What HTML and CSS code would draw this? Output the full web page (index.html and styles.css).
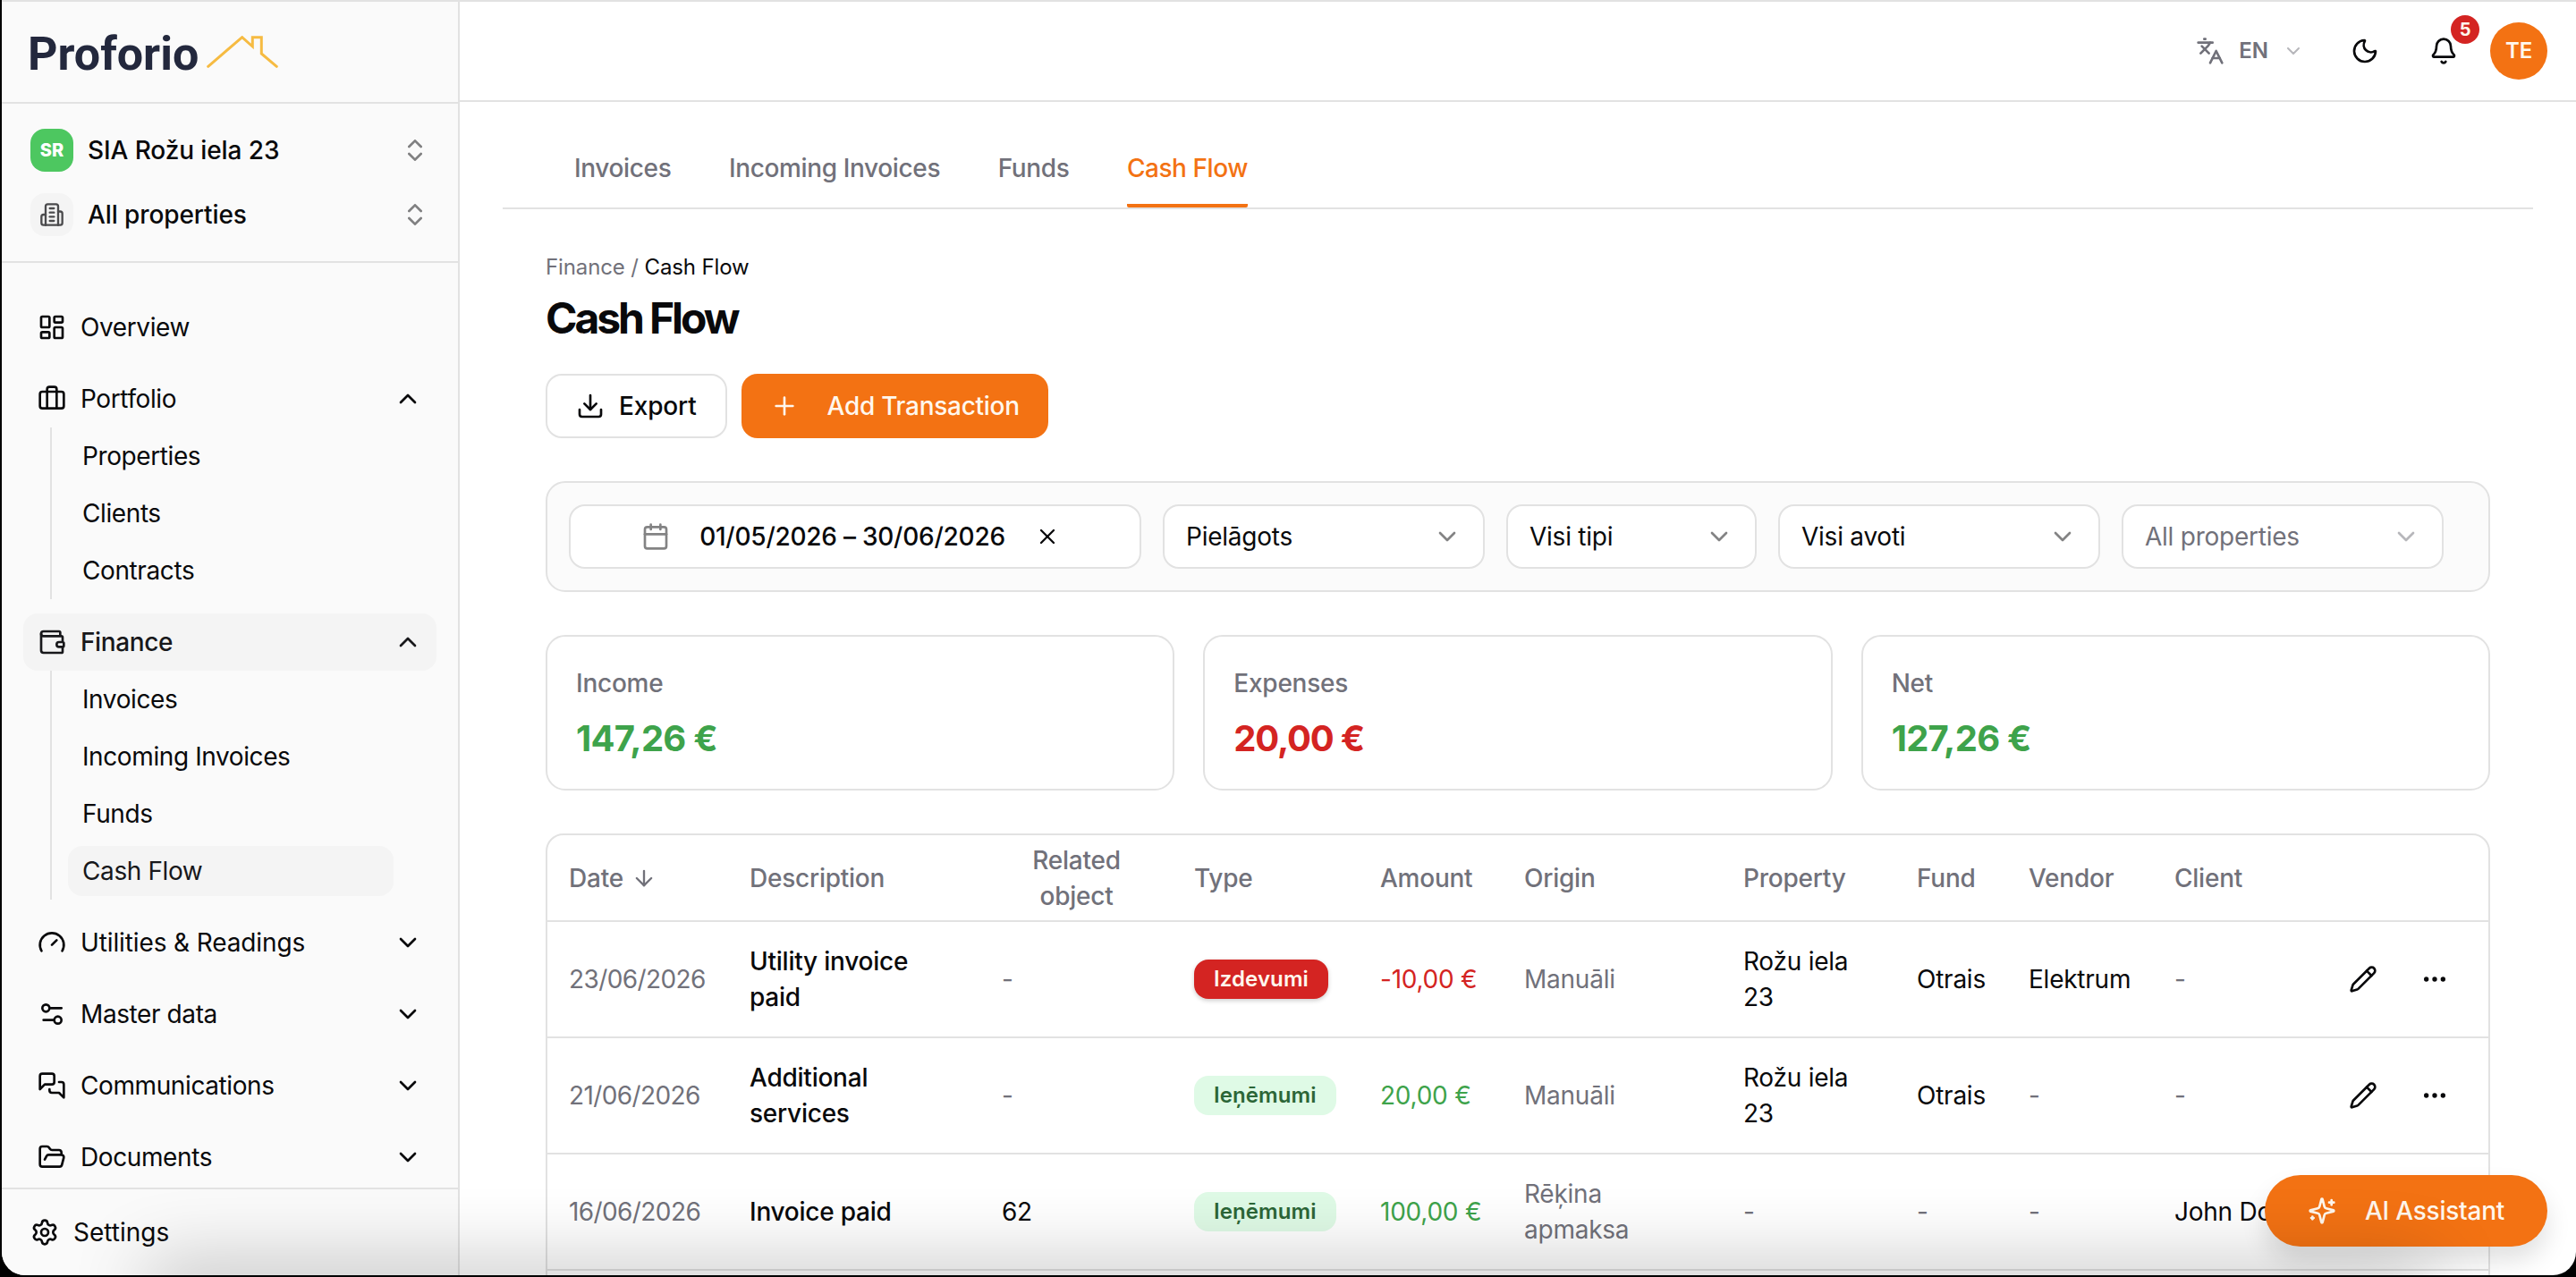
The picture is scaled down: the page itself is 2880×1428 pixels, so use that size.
FILE: index.html
```html
<!DOCTYPE html>
<html lang="en">
<head>
<meta charset="utf-8">
<title>Cash Flow</title>
<link rel="stylesheet" href="styles.css">
</head>
<body>
<svg class="sprite" aria-hidden="true">
  <symbol id="i-updown" viewBox="0 0 24 24"><path d="m7 15 5 5 5-5"/><path d="m7 9 5-5 5 5"/></symbol>
  <symbol id="i-building" viewBox="0 0 24 24"><path d="M6 22V4a2 2 0 0 1 2-2h8a2 2 0 0 1 2 2v18Z"/><path d="M6 12H4a2 2 0 0 0-2 2v6a2 2 0 0 0 2 2h2"/><path d="M18 9h2a2 2 0 0 1 2 2v9a2 2 0 0 1-2 2h-2"/><path d="M10 6h4"/><path d="M10 10h4"/><path d="M10 14h4"/><path d="M10 18h4"/></symbol>
  <symbol id="i-dashboard" viewBox="0 0 24 24"><rect width="7" height="9" x="3" y="3" rx="1"/><rect width="7" height="5" x="14" y="3" rx="1"/><rect width="7" height="9" x="14" y="12" rx="1"/><rect width="7" height="5" x="3" y="16" rx="1"/></symbol>
  <symbol id="i-luggage" viewBox="0 0 24 24"><path d="M16 20V4a2 2 0 0 0-2-2h-4a2 2 0 0 0-2 2v16"/><rect width="20" height="14" x="2" y="6" rx="2"/></symbol>
  <symbol id="i-wallet" viewBox="0 0 24 24"><path d="M19 7V4a1 1 0 0 0-1-1H5a2 2 0 0 0 0 4h15a1 1 0 0 1 1 1v4h-3a2 2 0 0 0 0 4h3a1 1 0 0 0 1-1v-2a1 1 0 0 0-1-1"/><path d="M3 5v14a2 2 0 0 0 2 2h15a1 1 0 0 0 1-1v-4"/></symbol>
  <symbol id="i-gauge" viewBox="0 0 24 24"><path d="m12 14 4-4"/><path d="M3.34 19a10 10 0 1 1 17.32 0"/></symbol>
  <symbol id="i-sliders" viewBox="0 0 24 24"><path d="M20 7h-9"/><path d="M14 17H5"/><circle cx="17" cy="17" r="3"/><circle cx="7" cy="7" r="3"/></symbol>
  <symbol id="i-messages" viewBox="0 0 24 24"><path d="M14 9a2 2 0 0 1-2 2H6l-4 4V4a2 2 0 0 1 2-2h8a2 2 0 0 1 2 2z"/><path d="M18 9h2a2 2 0 0 1 2 2v11l-4-4h-6a2 2 0 0 1-2-2v-1"/></symbol>
  <symbol id="i-folder" viewBox="0 0 24 24"><path d="m6 14 1.5-2.9A2 2 0 0 1 9.24 10H20a2 2 0 0 1 1.94 2.5l-1.54 6a2 2 0 0 1-1.95 1.5H4a2 2 0 0 1-2-2V5a2 2 0 0 1 2-2h3.9a2 2 0 0 1 1.69.9l.81 1.2a2 2 0 0 0 1.67.9H18a2 2 0 0 1 2 2v2"/></symbol>
  <symbol id="i-settings" viewBox="0 0 24 24"><path d="M9.671 4.136a2.34 2.34 0 0 1 4.659 0 2.34 2.34 0 0 0 3.319 1.915 2.34 2.34 0 0 1 2.33 4.033 2.34 2.34 0 0 0 0 3.831 2.34 2.34 0 0 1-2.33 4.033 2.34 2.34 0 0 0-3.319 1.915 2.34 2.34 0 0 1-4.659 0 2.34 2.34 0 0 0-3.32-1.915 2.34 2.34 0 0 1-2.33-4.033 2.34 2.34 0 0 0 0-3.831A2.34 2.34 0 0 1 6.35 6.051a2.34 2.34 0 0 0 3.319-1.915"/><circle cx="12" cy="12" r="3"/></symbol>
  <symbol id="i-down" viewBox="0 0 24 24"><path d="m6 9 6 6 6-6"/></symbol>
  <symbol id="i-up" viewBox="0 0 24 24"><path d="m18 15-6-6-6 6"/></symbol>
  <symbol id="i-lang" viewBox="0 0 24 24"><path d="m5 8 6 6"/><path d="m4 14 6-6 2-3"/><path d="M2 5h12"/><path d="M7 2h1"/><path d="m22 22-5-10-5 10"/><path d="M14 18h6"/></symbol>
  <symbol id="i-moon" viewBox="0 0 24 24"><path d="M20.985 12.486a9 9 0 1 1-9.473-9.472c.405-.022.617.46.402.803a6 6 0 0 0 8.268 8.268c.344-.215.825-.004.803.401"/></symbol>
  <symbol id="i-bell" viewBox="0 0 24 24"><path d="M10.268 21a2 2 0 0 0 3.464 0"/><path d="M3.262 15.326A1 1 0 0 0 4 17h16a1 1 0 0 0 .74-1.673C19.41 13.956 18 12.499 18 8A6 6 0 0 0 6 8c0 4.499-1.411 5.956-2.738 7.326"/></symbol>
  <symbol id="i-download" viewBox="0 0 24 24"><path d="M12 15V3"/><path d="M21 15v4a2 2 0 0 1-2 2H5a2 2 0 0 1-2-2v-4"/><path d="m7 10 5 5 5-5"/></symbol>
  <symbol id="i-plus" viewBox="0 0 24 24"><path d="M5 12h14"/><path d="M12 5v14"/></symbol>
  <symbol id="i-calendar" viewBox="0 0 24 24"><path d="M8 2v4"/><path d="M16 2v4"/><rect width="18" height="18" x="3" y="4" rx="2"/><path d="M3 10h18"/></symbol>
  <symbol id="i-x" viewBox="0 0 24 24"><path d="M18 6 6 18"/><path d="m6 6 12 12"/></symbol>
  <symbol id="i-arrow" viewBox="0 0 24 24"><path d="M12 5v14"/><path d="m19 12-7 7-7-7"/></symbol>
  <symbol id="i-pencil" viewBox="0 0 24 24"><path d="M21.174 6.812a1 1 0 0 0-3.986-3.987L3.842 16.174a2 2 0 0 0-.5.83l-1.321 4.352a.5.5 0 0 0 .623.622l4.353-1.32a2 2 0 0 0 .83-.497z"/><path d="m15 5 4 4"/></symbol>
  <symbol id="i-dots" viewBox="0 0 24 24"><circle cx="12" cy="12" r="1"/><circle cx="19" cy="12" r="1"/><circle cx="5" cy="12" r="1"/></symbol>
  <symbol id="i-sparkles" viewBox="0 0 24 24"><path d="M9.937 15.5A2 2 0 0 0 8.5 14.063l-6.135-1.582a.5.5 0 0 1 0-.962L8.5 9.936A2 2 0 0 0 9.937 8.5l1.582-6.135a.5.5 0 0 1 .963 0L14.063 8.5A2 2 0 0 0 15.5 9.937l6.135 1.581a.5.5 0 0 1 0 .964L15.5 14.063a2 2 0 0 0-1.437 1.437l-1.582 6.135a.5.5 0 0 1-.963 0z"/><path d="M20 3v4"/><path d="M22 5h-4"/><path d="M4 17v2"/><path d="M5 18H3"/></symbol>
</svg>
<div class="window">
  <aside class="sidebar">
    <div class="brand">
      <span class="brand-name">Proforio</span>
      <svg class="brand-roof" viewBox="0 0 80 36"><path d="M1.700 34.300 39.700 1.700l11.600 10.300V1.700h10V20l17 14.300"/></svg>
    </div>
    <div class="switchers">
      <div class="switcher"><span class="tile tile-green">SR</span><span class="switcher-name">SIA Rožu iela 23</span><svg class="icon faded"><use href="#i-updown"/></svg></div>
      <div class="switcher"><span class="tile tile-gray"><svg class="icon icon-28"><use href="#i-building"/></svg></span><span class="switcher-name">All properties</span><svg class="icon faded"><use href="#i-updown"/></svg></div>
    </div>
    <nav class="nav">
      <div class="group"><div class="item"><svg class="icon"><use href="#i-dashboard"/></svg><span>Overview</span></div></div>
      <div class="group">
        <div class="item"><svg class="icon"><use href="#i-luggage"/></svg><span>Portfolio</span><svg class="icon"><use href="#i-up"/></svg></div>
        <div class="sub"><div class="subitem">Properties</div><div class="subitem">Clients</div><div class="subitem">Contracts</div></div>
      </div>
      <div class="group">
        <div class="item item-active"><svg class="icon"><use href="#i-wallet"/></svg><span>Finance</span><svg class="icon"><use href="#i-up"/></svg></div>
        <div class="sub"><div class="subitem">Invoices</div><div class="subitem">Incoming Invoices</div><div class="subitem">Funds</div><div class="subitem subitem-active">Cash Flow</div></div>
      </div>
      <div class="group"><div class="item item-long"><svg class="icon"><use href="#i-gauge"/></svg><span>Utilities &amp; Readings</span><svg class="icon"><use href="#i-down"/></svg></div></div>
      <div class="group"><div class="item"><svg class="icon"><use href="#i-sliders"/></svg><span>Master data</span><svg class="icon"><use href="#i-down"/></svg></div></div>
      <div class="group"><div class="item"><svg class="icon"><use href="#i-messages"/></svg><span>Communications</span><svg class="icon"><use href="#i-down"/></svg></div></div>
      <div class="group"><div class="item"><svg class="icon"><use href="#i-folder"/></svg><span>Documents</span><svg class="icon"><use href="#i-down"/></svg></div></div>
    </nav>
    <div class="settings"><svg class="icon"><use href="#i-settings"/></svg><span>Settings</span></div>
  </aside>
  <main class="main">
    <header class="topbar">
      <div class="lang"><svg class="icon"><use href="#i-lang"/></svg><span>EN</span><svg class="icon icon-24 faded"><use href="#i-down"/></svg></div>
      <svg class="icon moon"><use href="#i-moon"/></svg>
      <div class="bell"><svg class="icon"><use href="#i-bell"/></svg><span class="count">5</span></div>
      <div class="avatar">TE</div>
    </header>
    <div class="tabs"><span class="tab">Invoices</span><span class="tab">Incoming Invoices</span><span class="tab">Funds</span><span class="tab tab-active">Cash Flow</span></div>
    <div class="page">
      <div class="crumbs">Finance <span>/</span> <b>Cash Flow</b></div>
      <h1 class="title">Cash Flow</h1>
      <div class="actions">
        <div class="btn"><svg class="icon"><use href="#i-download"/></svg><span>Export</span></div>
        <div class="btn btn-primary"><svg class="icon"><use href="#i-plus"/></svg><span>Add Transaction</span></div>
      </div>
      <div class="filters">
        <div class="field field-date"><svg class="icon faded"><use href="#i-calendar"/></svg><span>01/05/2026 – 30/06/2026</span><svg class="icon icon-28"><use href="#i-x"/></svg></div>
        <div class="field field-wide"><span>Pielāgots</span><svg class="icon faded"><use href="#i-down"/></svg></div>
        <div class="field field-narrow"><span>Visi tipi</span><svg class="icon faded"><use href="#i-down"/></svg></div>
        <div class="field field-wide"><span>Visi avoti</span><svg class="icon faded"><use href="#i-down"/></svg></div>
        <div class="field field-wide field-muted"><span>All properties</span><svg class="icon faded"><use href="#i-down"/></svg></div>
      </div>
      <div class="stats">
        <div class="stat"><div class="stat-label">Income</div><div class="stat-value green">147,26 €</div></div>
        <div class="stat"><div class="stat-label">Expenses</div><div class="stat-value red">20,00 €</div></div>
        <div class="stat"><div class="stat-label">Net</div><div class="stat-value green">127,26 €</div></div>
      </div>
      <div class="table">
        <div class="row head"><div class="sort">Date <svg class="icon icon-28"><use href="#i-arrow"/></svg></div><div>Description</div><div class="center">Related<br>object</div><div>Type</div><div>Amount</div><div>Origin</div><div>Property</div><div>Fund</div><div>Vendor</div><div>Client</div><div></div></div>
        <div class="row"><div class="muted date">23/06/2026</div><div class="strong">Utility invoice<br>paid</div><div class="muted">-</div><div><span class="badge badge-red">Izdevumi</span></div><div class="red">-10,00 €</div><div class="muted">Manuāli</div><div>Rožu iela<br>23</div><div>Otrais</div><div>Elektrum</div><div class="muted">-</div><div class="tools"><svg class="icon"><use href="#i-pencil"/></svg><svg class="icon"><use href="#i-dots"/></svg></div></div>
        <div class="row"><div class="muted date">21/06/2026</div><div class="strong">Additional<br>services</div><div class="muted">-</div><div><span class="badge">Ieņēmumi</span></div><div class="green">20,00 €</div><div class="muted">Manuāli</div><div>Rožu iela<br>23</div><div>Otrais</div><div class="muted">-</div><div class="muted">-</div><div class="tools"><svg class="icon"><use href="#i-pencil"/></svg><svg class="icon"><use href="#i-dots"/></svg></div></div>
        <div class="row"><div class="muted date">16/06/2026</div><div class="strong">Invoice paid</div><div>62</div><div><span class="badge">Ieņēmumi</span></div><div class="green">100,00 €</div><div class="muted">Rēķina<br>apmaksa</div><div class="muted">-</div><div class="muted">-</div><div class="muted">-</div><div>John Doe</div><div></div></div>
        <div class="row"></div>
      </div>
    </div>
  </main>
  <div class="assistant"><svg class="icon"><use href="#i-sparkles"/></svg><span>AI Assistant</span></div>
  <div class="shade"></div>
</div>
</body>
</html>
```
FILE: styles.css
```css
* { box-sizing: border-box; }
body {
  margin: 0;
  width: 2880px;
  height: 1428px;
  overflow: hidden;
  background: #000;
  color: #09090b;
  font: 400 28px/40px Inter, "Liberation Sans", sans-serif;
  letter-spacing: -.24px;
}
.sprite { position: absolute; width: 0; height: 0; }
.window {
  position: relative;
  display: flex;
  height: 1426px;
  margin-left: 2px;
  overflow: hidden;
  background: #fff;
  border-top: 2px solid #e2e2e2;
  border-radius: 0 0 26px 26px;
}
.icon {
  display: block;
  flex: none;
  width: 32px;
  height: 32px;
  fill: none;
  stroke: currentColor;
  stroke-width: 2;
  stroke-linecap: round;
  stroke-linejoin: round;
}
.icon-28 { width: 28px; height: 28px; }
.icon-24 { width: 24px; height: 24px; }
.faded { opacity: .5; }
.muted { color: #71717a; }
.green { color: #3ea34b; }
.red { color: #d42422; }
.strong { font-weight: 500; }
.date { letter-spacing: -.6px; }

/* Sidebar */
.sidebar {
  display: flex;
  flex: none;
  flex-direction: column;
  width: 512px;
  background: #fafafa;
  border-right: 2px solid #e2e2e2;
}
.brand {
  display: flex;
  flex: none;
  align-items: flex-start;
  height: 114px;
  padding: 31px 0 0 29px;
  border-bottom: 2px solid #e2e2e2;
}
.brand-name {
  flex: none;
  width: 200px;
  color: #23283d;
  font: 700 52px/56px "Roboto", sans-serif;
  letter-spacing: 0;
}
.brand-roof {
  flex: none;
  width: 80px;
  height: 36px;
  margin-top: 7px;
  fill: none;
  stroke: #f6bb42;
  stroke-width: 3;
  stroke-linecap: round;
}
.switchers {
  display: flex;
  flex: none;
  flex-direction: column;
  gap: 24px;
  height: 178px;
  padding: 28px 32px 0;
  border-bottom: 2px solid #e2e2e2;
}
.switcher { display: flex; align-items: center; height: 48px; gap: 16px; letter-spacing: -.1px; }
.switcher-name { flex: 1; font-weight: 500; }
.tile {
  display: grid;
  place-items: center;
  width: 48px;
  height: 48px;
  border-radius: 16px;
}
.tile-green { background: #4dc760; color: #fff; font-size: 20px; font-weight: 800; letter-spacing: 0; }
.tile-gray { background: #f4f4f4; color: #4b4b4d; }
.nav {
  display: flex;
  flex: 1;
  flex-direction: column;
  gap: 16px;
  padding: 40px 24px 0;
  letter-spacing: -.4px;
}
.item {
  display: flex;
  align-items: center;
  gap: 16px;
  height: 64px;
  padding: 0 16px;
  border-radius: 16px;
}
.item span { flex: 1; }
.item-long { letter-spacing: -.12px; }
.item-active { background: #f4f4f4; color: #18181b; font-weight: 500; }
.sub { margin: 0 48px 0 30px; padding: 4px 0 4px 18px; border-left: 2px solid #e2e2e2; }
.subitem { height: 56px; padding: 8px 16px; border-radius: 16px; }
.subitem + .subitem { margin-top: 8px; }
.subitem-active { background: #f4f4f4; color: #18181b; }
.settings {
  display: flex;
  flex: none;
  align-items: center;
  gap: 16px;
  height: 98px;
  padding-left: 32px;
  border-top: 2px solid #e2e2e2;
  letter-spacing: 0;
}

/* Top bar */
.main { flex: 1; min-width: 0; }
.topbar {
  display: flex;
  align-items: center;
  justify-content: flex-end;
  height: 112px;
  padding-right: 32px;
  border-bottom: 2px solid #e2e2e2;
}
.lang {
  display: flex;
  align-items: center;
  gap: 16px;
  color: #71717a;
  font-size: 24px;
  font-weight: 600;
  letter-spacing: 0;
}
.moon { margin-left: 52px; }
.bell { position: relative; margin: 0 36px 0 56px; }
.count {
  position: absolute;
  top: -24px;
  left: 24px;
  width: 32px;
  height: 32px;
  border-radius: 50%;
  background: #d42422;
  color: #fff7ed;
  font: 700 20px/32px Inter, sans-serif;
  text-align: center;
}
.avatar {
  display: grid;
  place-items: center;
  width: 64px;
  height: 64px;
  border-radius: 50%;
  background: #f37213;
  color: #fff7ed;
  font-size: 24px;
  font-weight: 600;
}
.tabs {
  display: flex;
  gap: 64.5px;
  height: 120px;
  margin: 0 48px;
  padding-left: 80px;
  border-bottom: 2px solid #e2e2e2;
  letter-spacing: -.36px;
}
.tab { padding-top: 54px; color: #71717a; font-weight: 500; border-bottom: 4px solid transparent; }
.tab-active { color: #f37213; border-color: #f37213; border-radius: 2px; letter-spacing: -.46px; }

/* Page */
.page { padding: 44px 96px 0; }
.crumbs { height: 40px; padding-top: 1px; color: #71717a; font-size: 24px; letter-spacing: -.12px; }
.crumbs b { color: #09090b; font-weight: 400; }
.title { margin: 8px 0 0; font-size: 48px; line-height: 60px; font-weight: 700; letter-spacing: -3.1px; }
.actions { display: flex; gap: 16px; margin-top: 32px; }
.btn {
  display: flex;
  align-items: center;
  gap: 16px;
  height: 72px;
  padding: 0 32px;
  border: 2px solid #e2e2e2;
  border-radius: 18px;
  font-weight: 500;
  letter-spacing: -.16px;
}
.btn-primary { gap: 32px; border: 0; background: #f37213; color: #fff7ed; letter-spacing: -.28px; }
.filters {
  display: flex;
  gap: 24px;
  height: 124px;
  margin-top: 48px;
  padding: 24px;
  border: 2px solid #e2e2e2;
  border-radius: 22px;
  background: #fbfbfb;
}
.field {
  display: flex;
  align-items: center;
  justify-content: space-between;
  height: 72px;
  padding: 0 24px;
  border: 2px solid #e2e2e2;
  border-radius: 18px;
  background: #fff;
}
.field-date { justify-content: center; gap: 33px; width: 640px; padding: 0 34px 0 24px; font-weight: 500; }
.field-wide { width: 360px; }
.field-narrow { width: 280px; }
.field-muted { color: #71717a; }
.stats { display: grid; grid-template-columns: repeat(3, 1fr); gap: 32px; margin-top: 48px; }
.stat { height: 174px; padding: 32px; border: 2px solid #e2e2e2; border-radius: 22px; }
.stat-label { color: #71717a; font-weight: 500; }
.stat-value { margin-top: 14px; font-size: 40px; line-height: 56px; font-weight: 700; letter-spacing: -.75px; }
.stat-value.red { letter-spacing: -1.2px; }

/* Table */
.table { margin-top: 48px; border: 2px solid #e2e2e2; border-radius: 20px; }
.row {
  display: grid;
  grid-template-columns: 202px 282px 215px 208px 161px 245px 194px 125px 163px 173px 1fr;
  align-items: center;
  height: 130px;
  border-bottom: 2px solid #e2e2e2;
}
.row > div { padding: 0 0 0 24px; white-space: nowrap; }
.head { height: 97px; padding-top: 1px; color: #71717a; font-weight: 500; }
.row .center { padding: 0; text-align: center; }
.sort { display: flex; align-items: center; gap: 9px; }
.badge {
  display: inline-block;
  height: 44px;
  padding: 0 22px;
  border-radius: 16px;
  background: #dffae6;
  color: #2c6637;
  font-size: 24px;
  line-height: 44px;
  font-weight: 600;
  letter-spacing: .1px;
  vertical-align: middle;
}
.badge-red { background: #d42422; color: #fff7ed; box-shadow: 0 2px 5px rgba(0, 0, 0, .2); }
.row .tools { display: flex; gap: 48px; padding-left: 46px; }

/* Floating assistant button */
.assistant {
  position: absolute;
  right: 32px;
  bottom: 32px;
  display: flex;
  align-items: center;
  gap: 32px;
  width: 316px;
  height: 80px;
  padding-left: 48px;
  border-radius: 40px;
  background: #f37213;
  color: #fff7ed;
  font-weight: 500;
  box-shadow: 0 16px 28px rgba(0, 0, 0, .12);
}
/* Soft shade along the bottom edge of the window */
.shade {
  position: absolute;
  left: 180px;
  right: 180px;
  bottom: -20px;
  height: 10px;
  box-shadow: 0 0 84px 18px rgba(0, 0, 0, .3);
}
```
